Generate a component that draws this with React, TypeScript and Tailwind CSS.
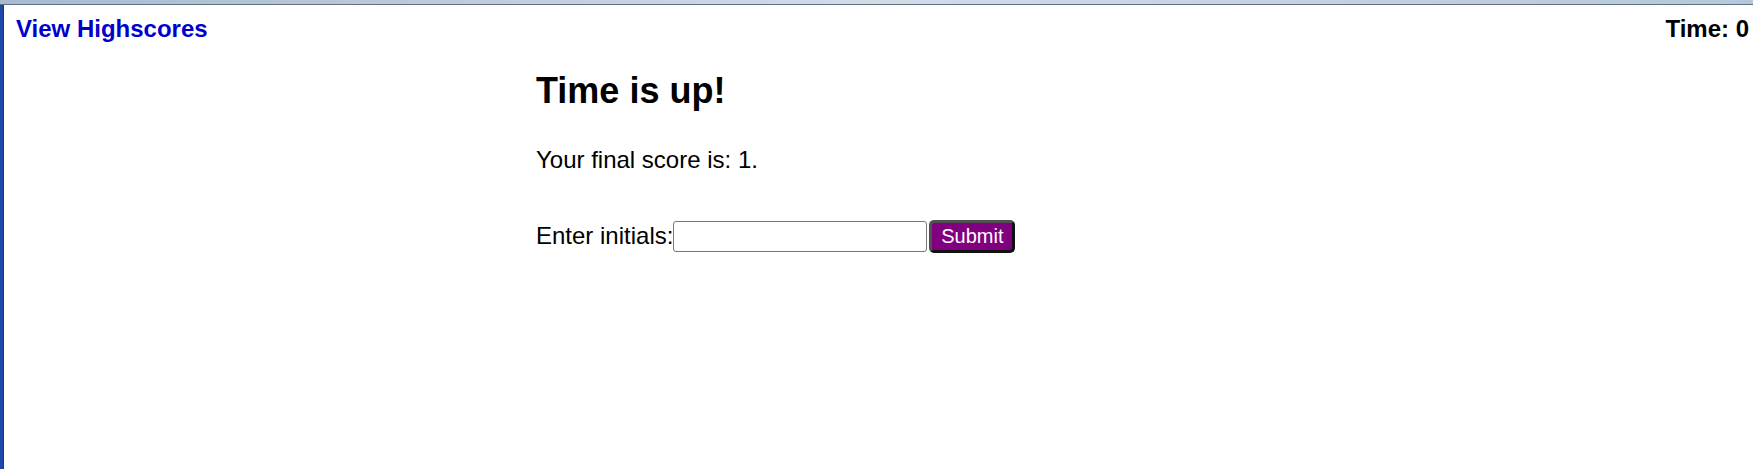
export default function App() {
  return (
    <div className="w-[1753px] h-[469px] flex flex-col bg-white font-['Liberation_Sans',Arial,sans-serif] text-black overflow-hidden">
      {/* window frame top */}
      <div className="h-[5px] shrink-0 bg-gradient-to-r from-[#a9b9cf] via-[#d3dbe7] to-[#b7c6da] border-b border-[#5f6f84]" />
      <div className="flex flex-1">
        {/* window frame left */}
        <div className="w-[4px] shrink-0 bg-[#1d4aa8] border-r border-[#123a8c]" />

        <div className="flex-1 flex flex-col">
          <header className="flex justify-between pt-[10px] pl-[12px] pr-[4px]">
            <a href="#" className="text-[24px] leading-[28px] font-bold text-[#0000cd]">
              View Highscores
            </a>
            <span className="text-[24px] leading-[28px] font-bold">Time: 0</span>
          </header>

          <main className="pl-[532px] flex flex-col items-start">
            <h2 className="mt-[28px] text-[36px] leading-[40px] font-bold">Time is up!</h2>
            <p className="mt-[35px] text-[24px] leading-[28px]">Your final score is: 1.</p>
            <div className="mt-[46px] flex items-center h-[32px]">
              <label className="text-[24px] leading-[28px]">Enter initials:</label>
              <input
                type="text"
                className="w-[254px] h-[31px] border border-[#767676] rounded-[3px] bg-white px-[3px] text-[20px] outline-none"
              />
              <button className="ml-[2px] w-[86px] h-[33px] bg-[#800080] text-white text-[20px] leading-[22px] rounded-[5px] border-[3px] border-t-[#505050] border-l-[#505050] border-r-[#111] border-b-[#111]">
                Submit
              </button>
            </div>
          </main>
        </div>
      </div>
    </div>
  );
}
